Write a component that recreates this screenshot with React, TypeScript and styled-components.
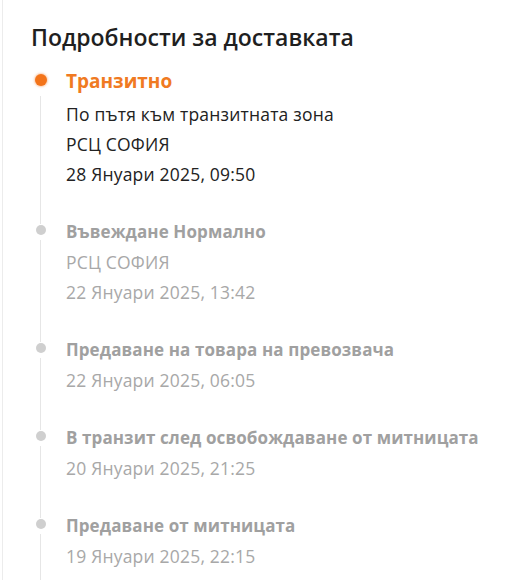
import React from 'react';
import styled, { createGlobalStyle, css } from 'styled-components';

const GlobalStyle = createGlobalStyle`
	html, body {
		margin: 0;
		padding: 0;
		background: #fff;
	}
	body {
		font-family: 'Open Sans', 'Noto Sans', sans-serif;
		color: #222;
	}
`;

interface Props {
	active?: boolean;
	first?: boolean;
}

const Page = styled.div`
	min-height: 580px;
	margin-left: 2px;
	border-left: 1px solid #ececec;
	padding: 21px 0 0 28px;
	box-sizing: border-box;
	overflow: hidden;
`;

const Heading = styled.h2`
	margin: 0 0 13px;
	font-size: 23px;
	line-height: 32px;
	font-weight: 600;
	color: #1f1f1f;
`;

const List = styled.ol`
	list-style: none;
	margin: 0;
	padding: 0;
`;

const Item = styled.li`
	display: flex;
	gap: 16px;
`;

const Rail = styled.div`
	width: 19px;
	flex: none;
	display: flex;
	flex-direction: column;
	align-items: center;
`;

const Segment = styled.div<Props>`
	width: 1px;
	background: ${(p) => (p.first ? 'transparent' : '#e6e6e6')};
	height: 7px;
	margin-bottom: 1px;
`;

const Tail = styled.div<Props>`
	width: 1px;
	flex: 1;
	background: #e6e6e6;
	margin-top: ${(p) => (p.active ? '10px' : '5px')};
`;

const Dot = styled.span<Props>`
	flex: none;
	width: 10px;
	height: 10px;
	border-radius: 50%;
	background: #cfcfcf;

	${(p) =>
		p.active &&
		css`
			width: 12px;
			height: 12px;
			background: #f3741a;
			box-shadow: 0 0 2px 1px rgba(243, 116, 26, 0.35);
		`}
`;

const Body = styled.div`
	padding-bottom: 28px;
	font-size: 17.5px;
	line-height: 30px;
	white-space: nowrap;
`;

const Status = styled.div<Props>`
	font-weight: 700;
	font-size: ${(p) => (p.active ? '19px' : '17px')};
	letter-spacing: ${(p) => (p.active ? '0' : '0.1px')};
	color: ${(p) => (p.active ? '#f07a22' : '#a0a0a0')};
	margin-bottom: ${(p) => (p.active ? '3px' : '0')};
`;

const Line = styled.div<Props>`
	letter-spacing: 0.2px;
	color: ${(p) => (p.active ? '#222' : '#a8a8a8')};
`;

interface Event {
	status: string;
	lines: string[];
}

const events: Event[] = [
	{
		status: 'Транзитно',
		lines: ['По пътя към транзитната зона', 'РСЦ СОФИЯ', '28 Януари 2025, 09:50'],
	},
	{ status: 'Въвеждане Нормално', lines: ['РСЦ СОФИЯ', '22 Януари 2025, 13:42'] },
	{ status: 'Предаване на товара на превозвача', lines: ['22 Януари 2025, 06:05'] },
	{ status: 'В транзит след освобождаване от митницата', lines: ['20 Януари 2025, 21:25'] },
	{ status: 'Предаване от митницата', lines: ['19 Януари 2025, 22:15'] },
];

export default function App() {
	return (
		<>
			<GlobalStyle />
			<Page>
				<Heading>Подробности за доставката</Heading>
				<List>
					{events.map((e, i) => {
						const active = i === 0;
						return (
							<Item key={e.status}>
								<Rail>
									<Segment first={active} />
									<Dot active={active} />
									<Tail active={active} />
								</Rail>
								<Body>
									<Status active={active}>{e.status}</Status>
									{e.lines.map((l) => (
										<Line key={l} active={active}>
											{l}
										</Line>
									))}
								</Body>
							</Item>
						);
					})}
				</List>
			</Page>
		</>
	);
}
